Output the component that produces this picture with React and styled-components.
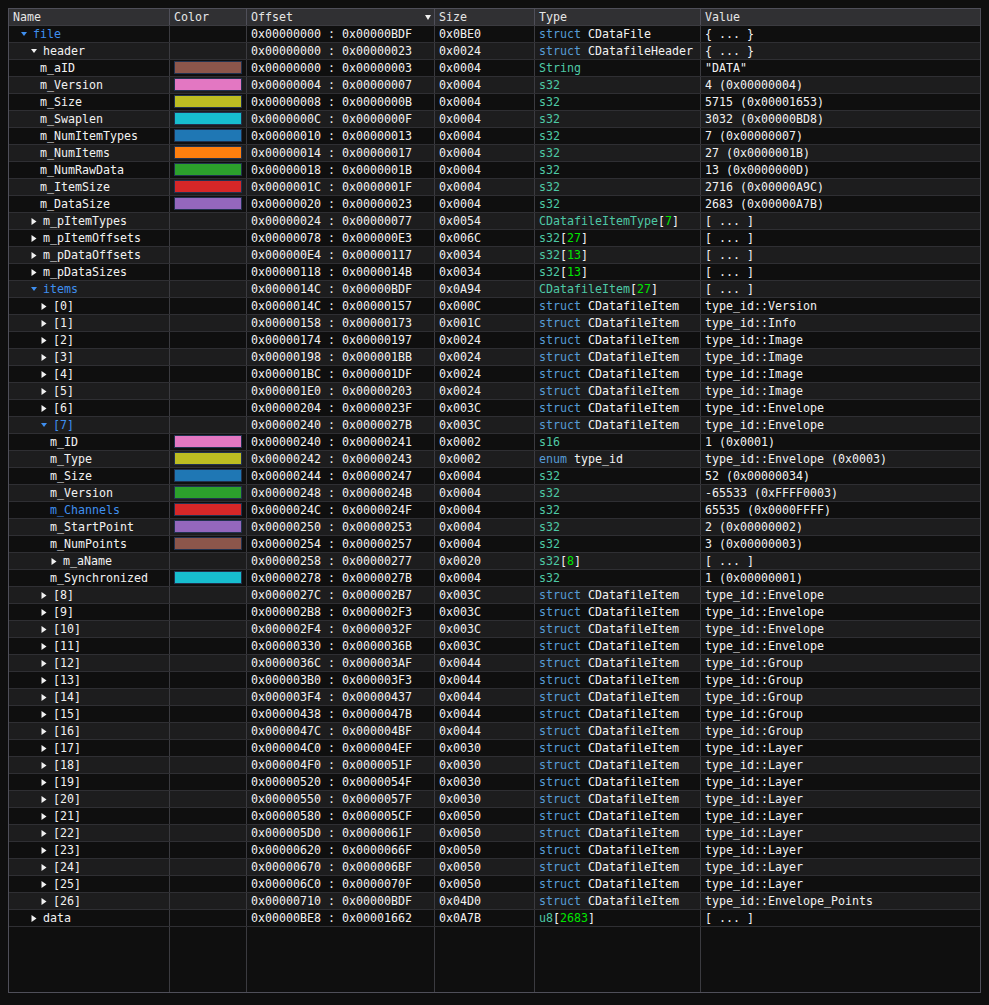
import React from "react";
import styled, { createGlobalStyle } from "styled-components";

const Global = createGlobalStyle`
  html, body { margin: 0; padding: 0; background: #0f0f0f; }
  body { font-family: "DejaVu Sans Mono", "Liberation Mono", monospace; font-size: 11.63px; color: #f2f2f2; }
  * { box-sizing: border-box; }
`;

const COLS = "161px 77px 188px 100px 166px 279px";

const Page = styled.div`
  padding: 8px 0 0 8px;
  width: 989px;
  height: 1005px;
  background: #0f0f0f;
`;

const Table = styled.div`
  width: 973px;
  height: 985px;
  border: 1px solid #4f4f59;
  background: #0f0f0f;
  display: flex;
  flex-direction: column;
`;

const HeaderRow = styled.div`
  display: grid;
  grid-template-columns: ${COLS};
  height: 17px;
  background: #303033;
  border-bottom: 1px solid #3b3b40;
  flex: none;
`;

const HeaderCell = styled.div`
  display: flex;
  align-items: center;
  justify-content: space-between;
  padding: 0 3px 0 4px;
  line-height: 16px;
  color: #e6e6e6;
  border-right: ${(p) => (p.$last ? "none" : "1px solid #4f4f59")};
  white-space: nowrap;
`;

const Row = styled.div`
  display: grid;
  grid-template-columns: ${COLS};
  height: 17px;
  background: ${(p) => (p.$alt ? "#1d1d1e" : "#0f0f0f")};
  border-bottom: 1px solid #2f2f33;
  flex: none;
`;

const Cell = styled.div`
  display: flex;
  align-items: center;
  padding-left: 4px;
  line-height: 16px;
  white-space: pre;
  overflow: hidden;
  border-right: ${(p) => (p.$last ? "none" : "1px solid #3b3b40")};
`;

const NameCell = styled(Cell)`
  padding-left: ${(p) => (p.$node ? 10 : 11) + 10 * p.$level}px;
  color: ${(p) => (p.$blue ? "#3f8fef" : "#f2f2f2")};
`;

const SwatchCell = styled(Cell)`
  padding: 0 4px;
  align-items: flex-start;
`;

const Swatch = styled.div`
  margin-top: 1px;
  width: 100%;
  height: 13px;
  background: ${(p) => p.$color};
  border: 1px solid #22324f;
`;

const Filler = styled.div`
  flex: 1;
  display: grid;
  grid-template-columns: ${COLS};
`;

const FillCell = styled.div`
  border-right: ${(p) => (p.$last ? "none" : "1px solid #3b3b40")};
`;

const ArrowBox = styled.svg`
  flex: none;
  margin-left: 2px;
  margin-right: 6px;
`;

const TypeLine = styled.span`white-space: pre;`;
const Kw = styled.span`color: #569cd6;`;
const Builtin = styled.span`color: #4ec9a6;`;
const Num = styled.span`color: #00e600;`;
const Plain = styled.span`color: #f2f2f2;`;

const Arrow = ({ open, color }) =>
  open ? (
    <ArrowBox width="6" height="6" viewBox="0 0 6 6">
      <polygon points="0,1 6,1 3,5" fill={color} />
    </ArrowBox>
  ) : (
    <ArrowBox width="6" height="7" viewBox="0 0 6 7">
      <polygon points="0.5,0 5.5,3.5 0.5,7" fill={color} />
    </ArrowBox>
  );

const TypeText = ({ t }) => {
  let m;
  if ((m = t.match(/^(struct|enum) (.*)$/))) {
    return (
      <TypeLine>
        <Kw>{m[1]}</Kw>
        <Plain>{" " + m[2]}</Plain>
      </TypeLine>
    );
  }
  if ((m = t.match(/^(.*)\[(\d+)\]$/))) {
    return (
      <TypeLine>
        <Builtin>{m[1]}</Builtin>
        <Plain>[</Plain>
        <Num>{m[2]}</Num>
        <Plain>]</Plain>
      </TypeLine>
    );
  }
  return (
    <TypeLine>
      <Builtin>{t}</Builtin>
    </TypeLine>
  );
};

const C = {
  brown: "#8c564b",
  pink: "#e377c2",
  olive: "#bcbd22",
  cyan: "#17becf",
  blue: "#1f77b4",
  orange: "#ff7f0e",
  green: "#2ca02c",
  red: "#d62728",
  purple: "#9467bd",
};

const h = (n) => "0x" + n.toString(16).toUpperCase().padStart(8, "0");
const h4 = (n) => "0x" + n.toString(16).toUpperCase().padStart(4, "0");

const rows = [];
const add = (level, name, node, start, size, type, value, extra = {}) =>
  rows.push({ level, name, node, start, size, type, value, ...extra });

add(0, "file", "open", 0x0, 0xbe0, "struct CDataFile", "{ ... }", { blue: true });
add(1, "header", "open", 0x0, 0x24, "struct CDatafileHeader", "{ ... }");
const hdr = [
  ["m_aID", C.brown, "String", '"DATA"'],
  ["m_Version", C.pink, "s32", "4 (0x00000004)"],
  ["m_Size", C.olive, "s32", "5715 (0x00001653)"],
  ["m_Swaplen", C.cyan, "s32", "3032 (0x00000BD8)"],
  ["m_NumItemTypes", C.blue, "s32", "7 (0x00000007)"],
  ["m_NumItems", C.orange, "s32", "27 (0x0000001B)"],
  ["m_NumRawData", C.green, "s32", "13 (0x0000000D)"],
  ["m_ItemSize", C.red, "s32", "2716 (0x00000A9C)"],
  ["m_DataSize", C.purple, "s32", "2683 (0x00000A7B)"],
];
hdr.forEach(([n, c, t, v], i) => add(2, n, null, i * 4, 4, t, v, { color: c }));
add(1, "m_pItemTypes", "closed", 0x24, 0x54, "CDatafileItemType[7]", "[ ... ]");
add(1, "m_pItemOffsets", "closed", 0x78, 0x6c, "s32[27]", "[ ... ]");
add(1, "m_pDataOffsets", "closed", 0xe4, 0x34, "s32[13]", "[ ... ]");
add(1, "m_pDataSizes", "closed", 0x118, 0x34, "s32[13]", "[ ... ]");
add(1, "items", "open", 0x14c, 0xa94, "CDatafileItem[27]", "[ ... ]", { blue: true });

const items = [
  [0x14c, 0x0c, "Version"],
  [0x158, 0x1c, "Info"],
  [0x174, 0x24, "Image"],
  [0x198, 0x24, "Image"],
  [0x1bc, 0x24, "Image"],
  [0x1e0, 0x24, "Image"],
  [0x204, 0x3c, "Envelope"],
  [0x240, 0x3c, "Envelope"],
  [0x27c, 0x3c, "Envelope"],
  [0x2b8, 0x3c, "Envelope"],
  [0x2f4, 0x3c, "Envelope"],
  [0x330, 0x3c, "Envelope"],
  [0x36c, 0x44, "Group"],
  [0x3b0, 0x44, "Group"],
  [0x3f4, 0x44, "Group"],
  [0x438, 0x44, "Group"],
  [0x47c, 0x44, "Group"],
  [0x4c0, 0x30, "Layer"],
  [0x4f0, 0x30, "Layer"],
  [0x520, 0x30, "Layer"],
  [0x550, 0x30, "Layer"],
  [0x580, 0x50, "Layer"],
  [0x5d0, 0x50, "Layer"],
  [0x620, 0x50, "Layer"],
  [0x670, 0x50, "Layer"],
  [0x6c0, 0x50, "Layer"],
  [0x710, 0x4d0, "Envelope_Points"],
];

const seven = [
  ["m_ID", C.pink, 0x240, 2, "s16", "1 (0x0001)", null],
  ["m_Type", C.olive, 0x242, 2, "enum type_id", "type_id::Envelope (0x0003)", null],
  ["m_Size", C.blue, 0x244, 4, "s32", "52 (0x00000034)", null],
  ["m_Version", C.green, 0x248, 4, "s32", "-65533 (0xFFFF0003)", null],
  ["m_Channels", C.red, 0x24c, 4, "s32", "65535 (0x0000FFFF)", null, true],
  ["m_StartPoint", C.purple, 0x250, 4, "s32", "2 (0x00000002)", null],
  ["m_NumPoints", C.brown, 0x254, 4, "s32", "3 (0x00000003)", null],
  ["m_aName", null, 0x258, 0x20, "s32[8]", "[ ... ]", "closed"],
  ["m_Synchronized", C.cyan, 0x278, 4, "s32", "1 (0x00000001)", null],
];

items.forEach(([s, z, v], i) => {
  const open = i === 7;
  add(2, `[${i}]`, open ? "open" : "closed", s, z, "struct CDatafileItem", `type_id::${v}`, {
    blue: open,
  });
  if (open) {
    seven.forEach(([n, c, st, sz, t, val, node, blue]) =>
      add(3, n, node, st, sz, t, val, { color: c, blue })
    );
  }
});
add(1, "data", "closed", 0xbe8, 0xa7b, "u8[2683]", "[ ... ]", { end: 0x1662 });

const headers = ["Name", "Color", "Offset", "Size", "Type", "Value"];

export default function App() {
  return (
    <Page>
      <Global />
      <Table>
        <HeaderRow>
          {headers.map((t, i) => (
            <HeaderCell key={t} $last={i === headers.length - 1}>
              <span>{t}</span>
              {t === "Offset" && (
                <svg width="6" height="5" viewBox="0 0 6 5">
                  <polygon points="0,0 6,0 3,5" fill="#f0f0f0" />
                </svg>
              )}
            </HeaderCell>
          ))}
        </HeaderRow>
        {rows.map((r, i) => {
          const textColor = r.blue ? "#3f8fef" : "#f2f2f2";
          const end = r.end !== undefined ? r.end : r.start + r.size - 1;
          return (
            <Row key={i} $alt={i % 2 === 1}>
              <NameCell $level={r.level} $node={!!r.node} $blue={r.blue}>
                {r.node && <Arrow open={r.node === "open"} color={textColor} />}
                <span>{r.name}</span>
              </NameCell>
              {r.color ? (
                <SwatchCell>
                  <Swatch $color={r.color} />
                </SwatchCell>
              ) : (
                <Cell />
              )}
              <Cell>{`${h(r.start)} : ${h(end)}`}</Cell>
              <Cell>{h4(r.size)}</Cell>
              <Cell>
                <TypeText t={r.type} />
              </Cell>
              <Cell $last>{r.value}</Cell>
            </Row>
          );
        })}
        <Filler>
          {headers.map((t, i) => (
            <FillCell key={t} $last={i === headers.length - 1} />
          ))}
        </Filler>
      </Table>
    </Page>
  );
}
